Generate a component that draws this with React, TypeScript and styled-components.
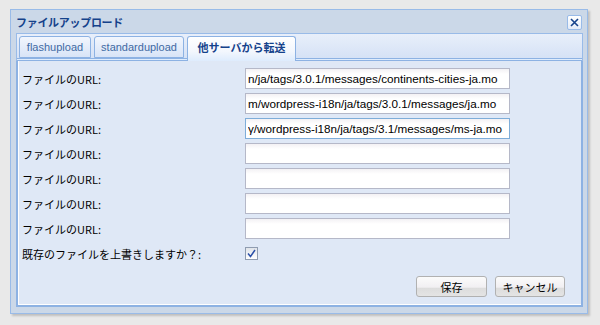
import styled, { createGlobalStyle } from "styled-components";

const GlobalStyle = createGlobalStyle`
  html, body {
    margin: 0;
    padding: 0;
    background: #e9e9e9;
  }
  body {
    font-family: "Liberation Sans", "Noto Sans CJK JP", sans-serif;
  }
`;

const Page = styled.div`
  width: 600px;
  height: 325px;
  padding: 9px 0 0 10px;
  box-sizing: border-box;
`;

const Window = styled.div`
  width: 578px;
  height: 305px;
  box-sizing: border-box;
  border: 1px solid #99bbe8;
  background: #cbd8e8;
  box-shadow: 2px 2px 2px rgba(0, 0, 0, 0.18);
  padding: 0 4px 6px 5px;
  display: flex;
  flex-direction: column;
`;

const Header = styled.div`
  height: 23px;
  display: flex;
  align-items: center;
  justify-content: space-between;
  padding: 0 1px 0 0;
`;

const Title = styled.div`
  font-family: "Noto Sans CJK JP", sans-serif;
  font-weight: bold;
  font-size: 11px;
  letter-spacing: -0.3px;
  color: #15428b;
`;

const CloseButton = styled.div`
  width: 13px;
  height: 13px;
  margin-top: 1px;
  border: 1px solid #99bbe8;
  border-radius: 2px;
  background: linear-gradient(#ffffff, #e4ecf8);
  display: flex;
  align-items: center;
  justify-content: center;

  & svg {
    width: 9px;
    height: 9px;
  }
`;

const TabPanel = styled.div`
  flex: 1;
  display: flex;
  flex-direction: column;
`;

const TabStrip = styled.div`
  height: 28px;
  box-sizing: border-box;
  border: 1px solid #99bbe8;
  border-bottom: none;
  background: linear-gradient(#e8effa, #d3e0f5);
  display: flex;
  align-items: flex-start;
  gap: 3px;
  padding: 2px 0 0 2px;
  position: relative;

  &::after {
    content: "";
    position: absolute;
    left: 0;
    right: 0;
    bottom: 0;
    height: 3px;
    box-sizing: border-box;
    border-top: 1px solid #8db2e3;
    border-bottom: 1px solid #8db2e3;
    background: #deecfd;
  }
`;

const Tab = styled.div<{ $active?: boolean; $width: number }>`
  width: ${(p) => p.$width}px;
  height: ${(p) => (p.$active ? 25 : 22)}px;
  box-sizing: border-box;
  text-align: center;
  border: 1px solid #8db2e3;
  border-bottom: ${(p) => (p.$active ? "none" : "1px solid #8db2e3")};
  border-radius: 3px 3px 0 0;
  background: ${(p) =>
    p.$active
      ? "linear-gradient(#ffffff, #f3f7fd 60%, #deecfd)"
      : "linear-gradient(#f2f6fd, #d8e4f7)"};
  color: ${(p) => (p.$active ? "#15428b" : "#416aa3")};
  font-family: ${(p) =>
    p.$active
      ? "\"Noto Sans CJK JP\", sans-serif"
      : "\"Liberation Sans\", \"Noto Sans CJK JP\", sans-serif"};
  font-weight: ${(p) => (p.$active ? "bold" : "normal")};
  font-size: 11px;
  line-height: ${(p) => (p.$active ? 21 : 20)}px;
  position: relative;
  z-index: 1;
  white-space: nowrap;
`;

const Body = styled.div`
  flex: 1;
  box-sizing: border-box;
  border: 2px solid #8db2e3;
  border-top: none;
  box-shadow: inset 1px 0 0 #ffffff, inset 0 -1px 0 #ffffff;
  background: #dfe8f6;
  padding: 7px 0 0 4px;
  display: flex;
  flex-direction: column;
`;

const Form = styled.div`
  display: flex;
  flex-direction: column;
  gap: 4px;
`;

const Row = styled.div`
  display: flex;
  align-items: center;
  height: 21px;
`;

const Label = styled.label`
  width: 223px;
  font-family: "Noto Sans CJK JP", sans-serif;
  font-size: 11px;
  color: #000;
`;

const TextField = styled.input<{ $focused?: boolean }>`
  width: 265px;
  height: 21px;
  box-sizing: border-box;
  border: 1px solid ${(p) => (p.$focused ? "#7eadd9" : "#b5b8c8")};
  background: linear-gradient(#f3f1f4, #ffffff 5px);
  padding: 0 2px 0 2px;
  font-family: "Liberation Sans", sans-serif;
  font-size: 11.7px;
  color: #000;
  outline: none;
`;

const CheckBox = styled.span`
  width: 13px;
  height: 13px;
  box-sizing: border-box;
  border: 1px solid #8f9cb0;
  background: linear-gradient(#e0e4ea, #ffffff);
  display: flex;
  align-items: center;
  justify-content: center;

  & svg {
    width: 9px;
    height: 9px;
  }
`;

const ButtonBar = styled.div`
  display: flex;
  justify-content: flex-end;
  gap: 8px;
  padding: 12px 16px 0 0;
`;

const Button = styled.button<{ $width: number }>`
  width: ${(p) => p.$width}px;
  height: 21px;
  box-sizing: border-box;
  border: 1px solid #b1b1b1;
  border-radius: 3px;
  background: linear-gradient(#fbfbfb, #f1eff2 55%, #dcdcdc 56%, #e4e4e4);
  font-family: "Noto Sans CJK JP", sans-serif;
  font-size: 11px;
  color: #000;
  padding: 0;
  cursor: pointer;
`;

const urls = [
  "n/ja/tags/3.0.1/messages/continents-cities-ja.mo",
  "m/wordpress-i18n/ja/tags/3.0.1/messages/ja.mo",
  "γ/wordpress-i18n/ja/tags/3.1/messages/ms-ja.mo",
  "",
  "",
  "",
  "",
];

export default function App() {
  return (
    <Page>
      <GlobalStyle />
      <Window>
        <Header>
          <Title>ファイルアップロード</Title>
          <CloseButton>
            <svg viewBox="0 0 9 9">
              <path d="M1 1l7 7M8 1l-7 7" stroke="#15428b" strokeWidth="1.6" />
            </svg>
          </CloseButton>
        </Header>
        <TabPanel>
          <TabStrip>
            <Tab $width={72}>flashupload</Tab>
            <Tab $width={90}>standardupload</Tab>
            <Tab $width={109} $active>
              他サーバから転送
            </Tab>
          </TabStrip>
          <Body>
            <Form>
              {urls.map((u, i) => (
                <Row key={i}>
                  <Label>ファイルのURL:</Label>
                  <TextField $focused={i === 2} defaultValue={u} />
                </Row>
              ))}
              <Row>
                <Label>既存のファイルを上書きしますか？:</Label>
                <CheckBox>
                  <svg viewBox="0 0 9 9">
                    <path d="M1 4.5l2.5 3L8 1" fill="none" stroke="#2a4fa8" strokeWidth="1.5" />
                  </svg>
                </CheckBox>
              </Row>
            </Form>
            <ButtonBar>
              <Button $width={71}>保存</Button>
              <Button $width={70}>キャンセル</Button>
            </ButtonBar>
          </Body>
        </TabPanel>
      </Window>
    </Page>
  );
}
